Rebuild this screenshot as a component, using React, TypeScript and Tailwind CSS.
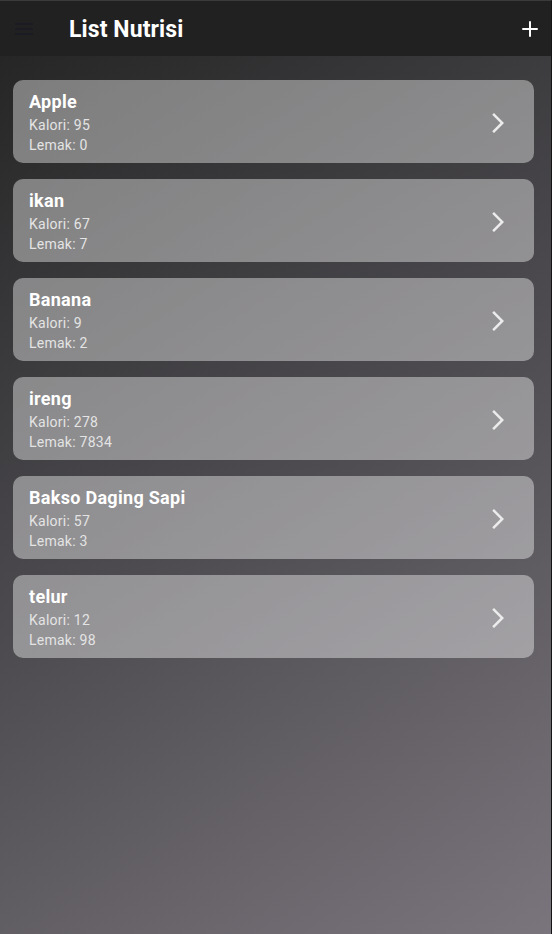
import { Plus } from 'lucide-react';

interface Food {
  name: string;
  kalori: number;
  lemak: number;
}

const foods: Food[] = [
  { name: 'Apple', kalori: 95, lemak: 0 },
  { name: 'ikan', kalori: 67, lemak: 7 },
  { name: 'Banana', kalori: 9, lemak: 2 },
  { name: 'ireng', kalori: 278, lemak: 7834 },
  { name: 'Bakso Daging Sapi', kalori: 57, lemak: 3 },
  { name: 'telur', kalori: 12, lemak: 98 },
];

function ArrowForwardIos() {
  return (
    <svg width="24" height="24" viewBox="0 0 24 24" className="shrink-0">
      <path d="M6.23 20.23L8 22l10-10L8 2 6.23 3.77 14.46 12z" fill="#ececec" />
    </svg>
  );
}

export default function App() {
  return (
    <div className="w-[552px] h-[934px] flex flex-col border-t border-r border-t-[#3b3b3b] border-r-[#151515] font-['Roboto',sans-serif] overflow-hidden">
      {/* App bar */}
      <div className="h-[55px] bg-[#212121] flex items-center pl-[15px] pr-px shrink-0">
        <svg width="18" height="12" viewBox="0 0 18 12">
          <path d="M0 0h18v2H0zM0 5h18v2H0zM0 10h18v2H0z" fill="#1b1b24" />
        </svg>
        <h1 className="ml-9 mt-1 text-[23px] font-bold text-white tracking-[0.1px]">List Nutrisi</h1>
        <button className="ml-auto w-10 h-10 flex items-center justify-center text-white">
          <Plus className="w-6 h-6" strokeWidth={2} />
        </button>
      </div>

      {/* List */}
      <div className="flex-1 bg-[linear-gradient(148deg,#262626_0%,#4e4c51_50%,#7a757c_100%)] pl-[13px] pr-[17px] pt-6 flex flex-col gap-4">
        {foods.map((food, i) => (
          <div key={i} className="bg-white/40 rounded-[10px] pl-4 pr-6 pt-[11px] pb-2 flex items-center">
            <div className="flex-1">
              <div className="text-[18px] leading-[22px] font-bold tracking-[0.3px] text-white">{food.name}</div>
              <div className="mt-[2px] text-[14px] leading-5 tracking-[0.25px] text-[#e4e4e4]">Kalori: {food.kalori}</div>
              <div className="text-[14px] leading-5 tracking-[0.25px] text-[#e4e4e4]">Lemak: {food.lemak}</div>
            </div>
            <ArrowForwardIos />
          </div>
        ))}
      </div>
    </div>
  );
}
